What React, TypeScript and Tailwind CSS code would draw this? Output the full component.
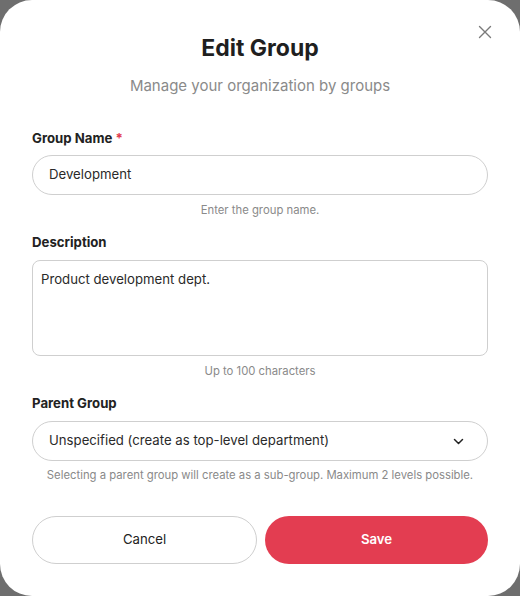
import React from "react";

export default function App() {
  return (
    <div className="w-[520px] h-[596px] bg-[#6e6e6e]" style={{ fontFamily: "Inter, 'Noto Sans', sans-serif" }}>
      <div className="relative w-full h-full bg-white rounded-[32px] px-8 pt-[34px] flex flex-col">
        <button className="absolute right-[26px] top-[23px] w-[18px] h-[18px] flex items-center justify-center text-[#7a7a7a]">
          <svg width="14" height="14" viewBox="0 0 14 14" fill="none" stroke="currentColor" strokeWidth="1.4" strokeLinecap="round">
            <path d="M1.5 1.5L12.5 12.5M12.5 1.5L1.5 12.5" />
          </svg>
        </button>
        <h1 className="text-center text-[23px] leading-[28px] font-bold text-[#1f1f1f]">Edit Group</h1>
        <p className="mt-3 text-center text-[15px] leading-6 text-[#8a8a8a]">Manage your organization by groups</p>

        <label className="mt-[30px] text-[13.2px] leading-5 font-bold text-[#222]">
          Group Name <span className="text-[#e23a4e]">*</span>
        </label>
        <div className="mt-[7px] h-10 rounded-full border border-[#cfcfcf] flex items-center px-4 text-[13.2px] text-[#2a2a2a]">
          Development
        </div>
        <p className="mt-[7px] text-center text-[11.3px] leading-4 text-[#8a8a8a]">Enter the group name.</p>

        <label className="mt-[14px] text-[13.2px] leading-5 font-bold text-[#222]">Description</label>
        <div className="mt-2 h-24 rounded-lg border border-[#cfcfcf] p-2 text-[13.2px] leading-5 text-[#2a2a2a]">
          Product development dept.
        </div>
        <p className="mt-[7px] text-center text-[11.3px] leading-4 text-[#8a8a8a]">Up to 100 characters</p>

        <label className="mt-[14px] text-[13.2px] leading-5 font-bold text-[#222]">Parent Group</label>
        <div className="mt-2 h-10 rounded-full border border-[#cfcfcf] flex items-center justify-between pl-4 pr-[23px] text-[13.2px] text-[#2a2a2a]">
          <span>Unspecified (create as top-level department)</span>
          <svg width="11" height="7" viewBox="0 0 11 7" fill="none" stroke="#222" strokeWidth="1.5" strokeLinecap="round" strokeLinejoin="round">
            <path d="M1.5 1.5L5.5 5.5L9.5 1.5" />
          </svg>
        </div>
        <p className="mt-[6px] text-center text-[11.3px] leading-4 text-[#8a8a8a]">
          Selecting a parent group will create as a sub-group. Maximum 2 levels possible.
        </p>

        <div className="mt-[33px] flex gap-2">
          <button className="flex-1 h-12 rounded-full border border-[#cfcfcf] bg-white text-[13.2px] text-[#222]">Cancel</button>
          <button className="flex-1 h-12 rounded-full bg-[#e33d51] text-[13.2px] font-semibold text-white">Save</button>
        </div>
      </div>
    </div>
  );
}
